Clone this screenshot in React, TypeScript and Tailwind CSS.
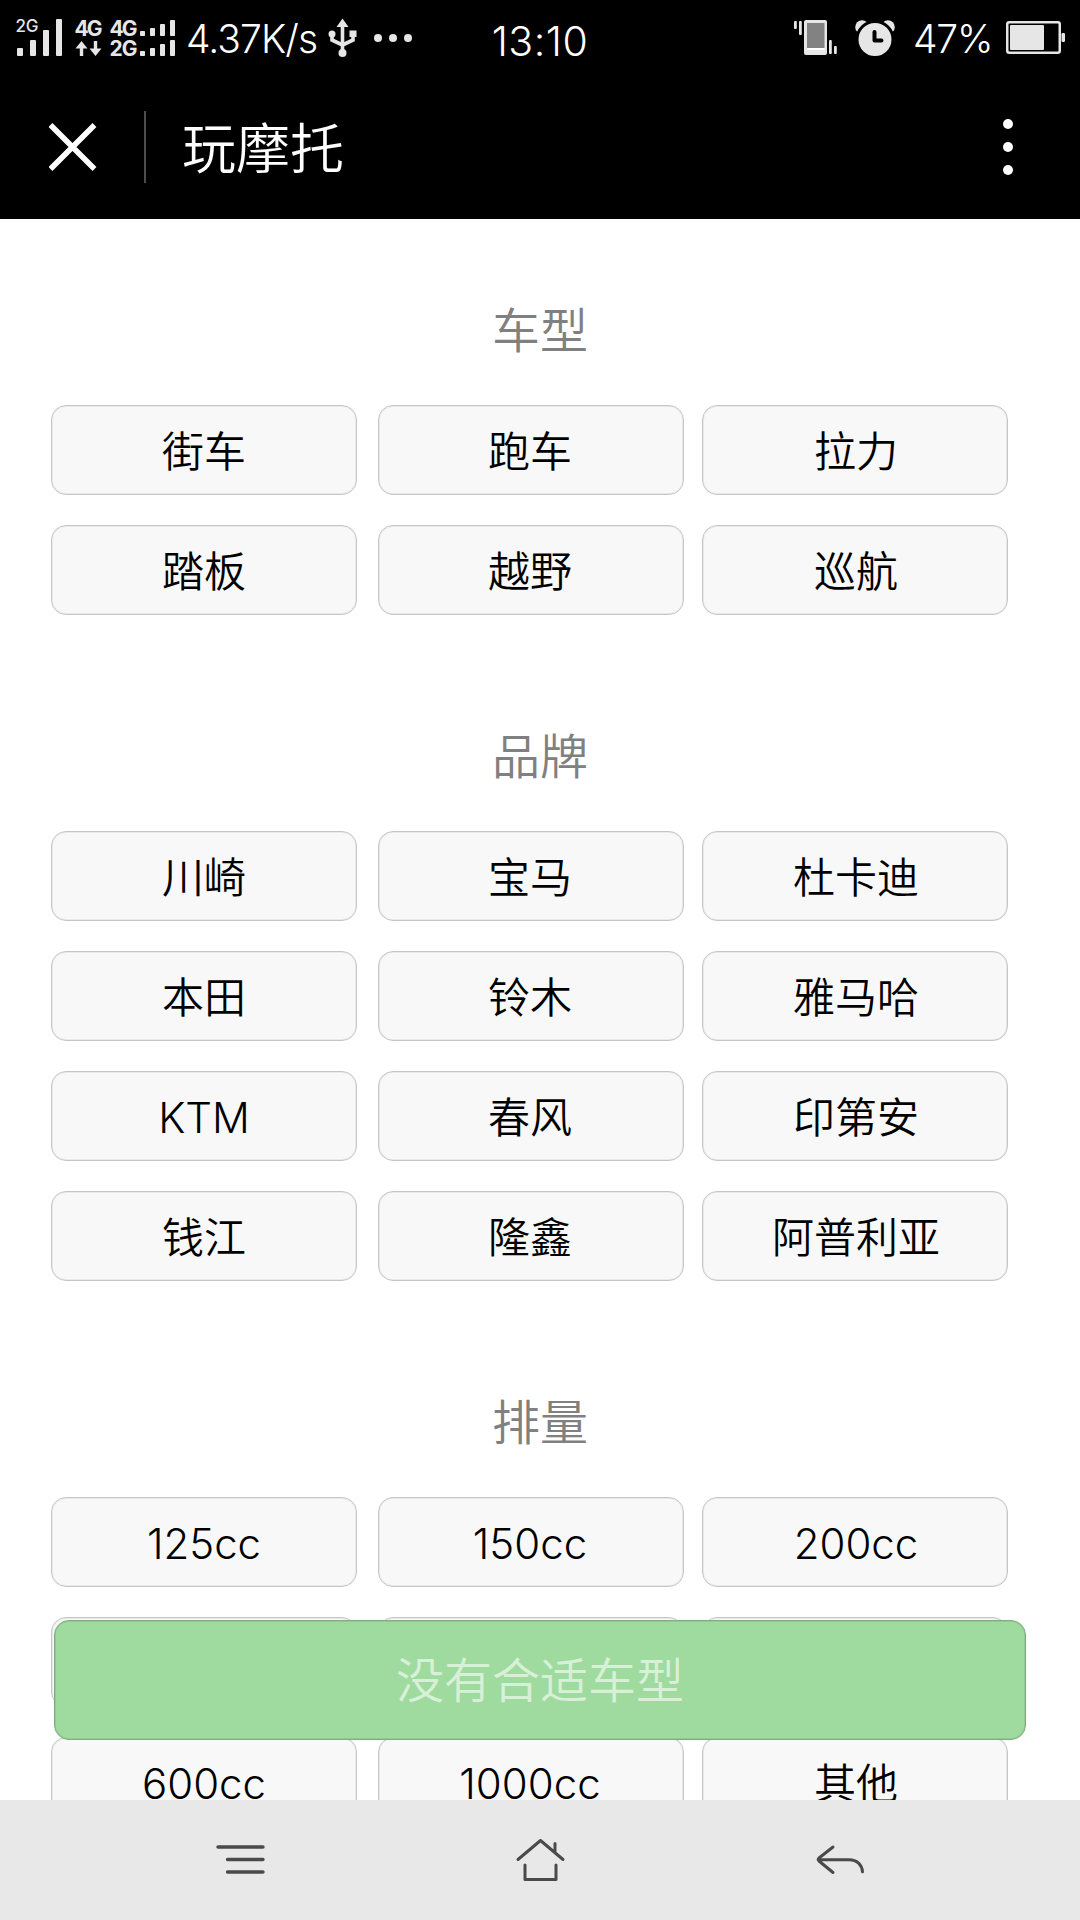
import clsx from "clsx";

const sections = [
  {
    title: "车型",
    items: ["街车", "跑车", "拉力", "踏板", "越野", "巡航"],
  },
  {
    title: "品牌",
    items: [
      "川崎",
      "宝马",
      "杜卡迪",
      "本田",
      "铃木",
      "雅马哈",
      "KTM",
      "春风",
      "印第安",
      "钱江",
      "隆鑫",
      "阿普利亚",
    ],
  },
  {
    title: "排量",
    items: ["125cc", "150cc", "200cc", "", "", "", "600cc", "1000cc", "其他"],
  },
];

function SignalIcons() {
  return (
    <svg
      width="166"
      height="60"
      viewBox="12 8 166 60"
      fill="#e6e6e6"
      className="-ml-[2px] font-['Inter',sans-serif]"
    >
      <text x="15.5" y="32" fontSize="17" fontWeight="500" textLength="23">
        2G
      </text>
      <rect x="17" y="48" width="6" height="8" rx="1" />
      <rect x="30" y="40" width="6" height="16" rx="1" />
      <rect x="43" y="30" width="6" height="26" rx="1" />
      <rect x="56" y="19" width="6" height="37" rx="1" />

      <g fontSize="21" fontWeight="700">
        <text x="74.5" y="36" textLength="28">
          4G
        </text>
        <text x="109.5" y="36" textLength="28">
          4G
        </text>
        <text x="109.5" y="56" textLength="28">
          2G
        </text>
      </g>
      <path d="M81.5 41l6 7.5h-4.3V56h-3.4v-7.5h-4.3z" />
      <path d="M95.5 56l-6-7.5h4.3V41h3.4v7.5h4.3z" />

      <rect x="140" y="31" width="5" height="5" rx="0.8" />
      <rect x="150" y="28" width="5" height="8" rx="0.8" />
      <rect x="160" y="24" width="5" height="12" rx="0.8" />
      <rect x="170" y="20" width="5" height="16" rx="0.8" />
      <rect x="140" y="51" width="5" height="5" rx="0.8" />
      <rect x="150" y="48" width="5" height="8" rx="0.8" />
      <rect x="160" y="44" width="5" height="12" rx="0.8" />
      <rect x="170" y="40" width="5" height="16" rx="0.8" />
    </svg>
  );
}

function UsbIcon() {
  return (
    <svg width="29" height="40" viewBox="328.5 18 29 40" fill="#e6e6e6">
      <path d="M343 18.5l6 8.5h-12z" />
      <path
        d="M343 25v28M332.5 34v6l10.5 5M353.5 34v6l-10.500 5"
        fill="none"
        stroke="#e6e6e6"
        strokeWidth="3.6"
      />
      <circle cx="332.5" cy="34" r="3.5" />
      <rect x="350" y="30.5" width="7" height="6.5" />
      <circle cx="343" cy="53" r="4" />
    </svg>
  );
}

function VibrateIcon() {
  return (
    <svg width="44" height="36" viewBox="794 19 44 36" fill="#e6e6e6">
      <rect x="794" y="20" width="2.8" height="8" rx="1" />
      <rect x="799" y="20" width="2.8" height="14" rx="1" />
      <rect x="804" y="19" width="23" height="35" rx="2" />
      <rect x="807" y="22" width="17.5" height="25" fill="#828282" />
      <rect x="807" y="47" width="17.5" height="2" fill="#fff" />
      <rect x="829" y="39" width="2.8" height="14" rx="1" />
      <rect x="834" y="45" width="2.8" height="8" rx="1" />
    </svg>
  );
}

function AlarmIcon() {
  return (
    <svg width="40" height="38" viewBox="855.5 18 40 38">
      <circle cx="862.5" cy="26" r="6.8" fill="#e6e6e6" />
      <circle cx="888.5" cy="26" r="6.8" fill="#e6e6e6" />
      <circle cx="875.5" cy="38.5" r="18" fill="#e6e6e6" stroke="#000" strokeWidth="3" />
      <path
        d="M875 31v8.5h7"
        fill="none"
        stroke="#000"
        strokeWidth="4"
        strokeLinecap="round"
        strokeLinejoin="round"
      />
    </svg>
  );
}

function BatteryIcon() {
  return (
    <svg width="60" height="34" viewBox="1006 21 60 34" fill="#e6e6e6">
      <rect x="1007.25" y="22.25" width="52.5" height="30.5" rx="2" fill="none" stroke="#e6e6e6" strokeWidth="2.5" />
      <rect x="1010" y="25" width="34" height="25" rx="1" />
      <rect x="1061.5" y="33" width="3.5" height="9" rx="1.2" />
    </svg>
  );
}

function StatusBar() {
  return (
    <div className="relative flex h-[73px] items-center justify-between bg-black pt-[3px] pr-[14px] pl-[14px] text-white">
      <div className="flex items-center">
        <SignalIcons />
        <span className="ml-[8px] w-[132px] pt-[2px] text-[39px] leading-[40px] font-light tracking-[-0.9px] whitespace-nowrap">
          4.37K/s
        </span>
        <span className="ml-[10px]">
          <UsbIcon />
        </span>
        <div className="ml-[17px] flex gap-[7px]">
          <i className="size-2 rounded-full bg-[#e6e6e6]" />
          <i className="size-2 rounded-full bg-[#e6e6e6]" />
          <i className="size-2 rounded-full bg-[#e6e6e6]" />
        </div>
      </div>
      <span className="absolute inset-x-0 top-[20px] text-center text-[41px] leading-[42px] font-light tracking-[0.5px]">
        13:10
      </span>
      <div className="flex items-center">
        <VibrateIcon />
        <span className="ml-[17px]">
          <AlarmIcon />
        </span>
        <span className="ml-[18px] w-[77px] pt-[2px] text-[39px] leading-[40px] font-light tracking-[-1.2px] whitespace-nowrap">
          47%
        </span>
        <span className="ml-[16px]">
          <BatteryIcon />
        </span>
      </div>
    </div>
  );
}

function TitleBar() {
  return (
    <header className="flex h-[146px] items-center bg-black pt-[2px] pr-[67px] pl-[49px] text-white">
      <svg width="48" height="48" viewBox="0 0 48 48" stroke="#fff" strokeWidth="5.5">
        <path d="M1.5 2l44 44M45.5 2l-44 44" />
      </svg>
      <div className="ml-[47px] h-[72px] w-[2px] bg-[#4d4d4d]" />
      <h1 className="ml-[36px] flex-1 pt-[5px] text-[54px] leading-[72px] font-[350]">玩摩托</h1>
      <div className="flex flex-col gap-[13px]">
        <i className="size-[10px] rounded-full bg-white" />
        <i className="size-[10px] rounded-full bg-white" />
        <i className="size-[10px] rounded-full bg-white" />
      </div>
    </header>
  );
}

function NavBar() {
  return (
    <nav className="flex h-[120px] items-center justify-between bg-[#e8e8e8] px-[214px]">
      <svg width="54" height="48" viewBox="214 1836 54 48" fill="none" stroke="#4a4a4a" strokeWidth="3.4" strokeLinecap="round">
        <path d="M218 1847h45M227.5 1859.5h35.5M227.5 1872h35.5" />
      </svg>
      <svg width="54" height="48" viewBox="513.500 1836 54 48" fill="none" stroke="#4a4a4a" strokeWidth="3" strokeLinecap="round" strokeLinejoin="round">
        <path d="M518.500 1859.500L541 1840.500l22.500 19M555.500 1843.500v8M525.500 1865v14.500h31V1865" />
      </svg>
      <svg width="54" height="48" viewBox="812 1836 54 48" fill="none" stroke="#4a4a4a" strokeWidth="3" strokeLinecap="round" strokeLinejoin="round">
        <path d="M833 1847l-14 11q-1.500 1.500 0 3l14 11.500M819 1859.800h30c8 0 13 5 13.500 12" />
      </svg>
    </nav>
  );
}

export default function App() {
  return (
    <div className="flex h-[1920px] w-[1080px] flex-col overflow-hidden bg-white font-['Inter','Noto_Sans_CJK_SC',sans-serif]">
      <StatusBar />
      <TitleBar />

      <main className="relative min-h-0 flex-1 overflow-hidden pt-[73px]">
        {sections.map((section) => (
          <section key={section.title} className="mb-[103px]">
            <h2 className="mb-[38px] pt-[3px] text-center text-[48px] leading-[72px] font-[350] text-[#808080]">
              {section.title}
            </h2>
            <div className="grid grid-cols-[327px_324px_306px] gap-y-[30px] pl-[51px]">
              {section.items.map((item, index) => (
                <button
                  key={index}
                  className={clsx(
                    "h-[90px] w-[306px] rounded-[15px] border border-[#c6c6c6] bg-[#f8f8f8] pt-[4px] text-black shadow-[inset_0_0_0_1px_rgba(0,0,0,0.06)]",
                    "text-[42px] leading-[60px] font-[350]",
                    index % 3 === 1 && "pr-[2px]",
                    index % 3 === 2 && "pl-[2px]"
                  )}
                >
                  {item}
                </button>
              ))}
            </div>
          </section>
        ))}

        {/* Floating submit button */}
        <button className="absolute bottom-[60px] left-[54px] h-[120px] w-[972px] rounded-[15px] border border-[#7fae7e] bg-[#9fdb9f] pt-[2px] text-[48px] leading-[72px] font-[350] text-white/60 shadow-[inset_0_0_0_1px_rgba(0,0,0,0.08)]">
          没有合适车型
        </button>
      </main>

      <NavBar />
    </div>
  );
}
